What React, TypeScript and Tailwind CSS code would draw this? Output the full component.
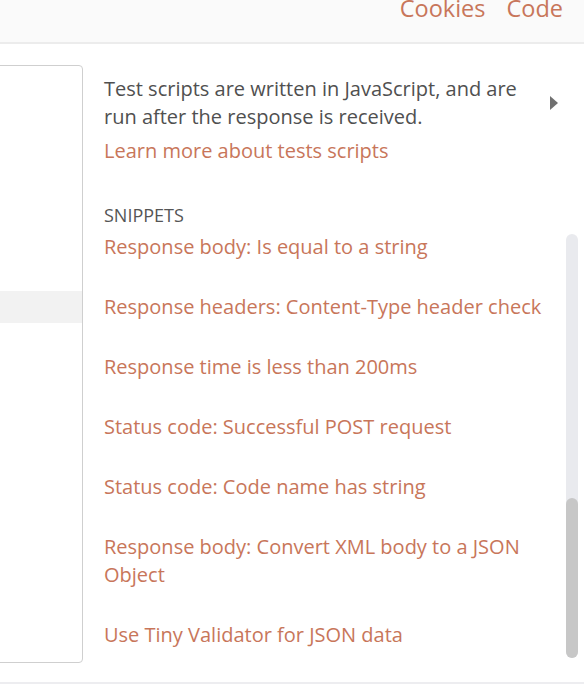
import React from 'react';

const snippets = [
    'Response body: Is equal to a string',
    'Response headers: Content-Type header check',
    'Response time is less than 200ms',
    'Status code: Successful POST request',
    'Status code: Code name has string',
    'Response body: Convert XML body to a JSON Object',
    'Use Tiny Validator for JSON data',
];

export default function App() {
    return (
        <div className="w-[584px] h-[686px] overflow-hidden bg-white relative font-['Open_Sans',sans-serif]">
            {/* Top bar */}
            <div className="h-[44px] bg-[#fafafa] border-b-2 border-[#ececec] flex justify-end items-start gap-[21px] pr-[21px]">
                <span className="text-[23.5px] leading-[24px] -mt-[4px] text-[#c8765a]">Cookies</span>
                <span className="text-[23.5px] leading-[24px] -mt-[4px] text-[#c8765a]">Code</span>
            </div>

            <div className="flex h-[640px] border-b-2 border-[#ededf0]">
                {/* Left editor panel */}
                <div className="-ml-[10px] mt-[21px] w-[93px] h-[598px] border border-[#cfcfcf] rounded-[4px] bg-white flex flex-col">
                    <div className="h-[225px]" />
                    <div className="h-[32px] bg-[#f2f2f2]" />
                </div>

                {/* Right sidebar */}
                <div className="flex-1 flex pl-[21px] relative">
                    <div className="flex-1 pt-[31px]">
                        <p className="text-[20px] leading-[28px] text-[#505050] w-[430px]">
                            Test scripts are written in JavaScript, and are run after the response is received.
                        </p>
                        <p className="mt-[6px] text-[20px] leading-[28px] text-[#c8765a]">Learn more about tests scripts</p>

                        <p className="mt-[38px] text-[18px] leading-[24px] text-[#555555] uppercase">Snippets</p>
                        <div className="flex flex-col mt-[6px]">
                            {snippets.map(s => (
                                <div key={s} className="text-[20px] leading-[28px] text-[#c8765a] pb-[32px] pr-[36px]">
                                    {s}
                                </div>
                            ))}
                        </div>
                    </div>

                    {/* collapse arrow */}
                    <div className="absolute left-[467px] top-[52px] w-0 h-0 border-y-[7px] border-y-transparent border-l-[8px] border-l-[#707070]" />

                    {/* scrollbar */}
                    <div className="absolute left-[483px] top-[190px] w-[12px] h-[424px] rounded-full bg-[#e9eaee]">
                        <div className="absolute left-0 bottom-0 w-[12px] h-[160px] rounded-full bg-[#c7c7c7]" />
                    </div>
                </div>
            </div>
        </div>
    );
}
